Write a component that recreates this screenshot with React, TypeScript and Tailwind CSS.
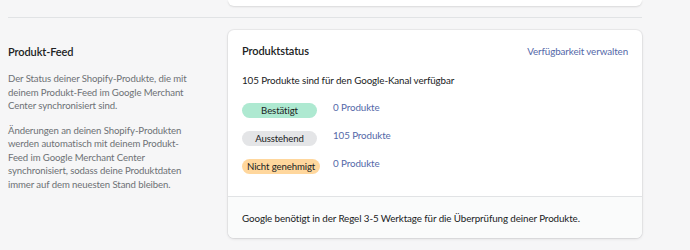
import React from "react";

const rows = [
  { label: "Bestätigt", badge: "bg-[#aee9d1]", count: "0 Produkte" },
  { label: "Ausstehend", badge: "bg-[#e4e5e7]", count: "105 Produkte" },
  { label: "Nicht genehmigt", badge: "bg-[#ffd79d]", count: "0 Produkte" },
];

const App = () => {
  return (
    <div className="w-[690px] h-[250px] overflow-hidden bg-[#f6f6f7] font-['Lato',sans-serif] text-[#202223] tracking-[-0.1px]">
      {/* end of the card above */}
      <div className="ml-[228px] w-[414px] h-[6px] bg-white rounded-b-[6px] shadow-[0_1px_2px_rgba(0,0,0,0.12)]" />

      <div className="ml-[8px] w-[634px] mt-[11px] border-t border-[#e1e3e5]" />

      <div className="flex pt-[12px]">
        <div className="w-[228px] shrink-0 pl-[8px] pr-[32px]">
          <h2 className="mt-[14px] text-[11px] leading-[16px] font-semibold">Produkt-Feed</h2>
          <p className="mt-[12px] text-[9.6px] leading-[13.5px] text-[#6d7175]">
            Der Status deiner Shopify-Produkte, die mit deinem Produkt-Feed im Google Merchant Center synchronisiert sind.
          </p>
          <p className="mt-[11px] text-[9.6px] leading-[13.5px] text-[#6d7175]">
            Änderungen an deinen Shopify-Produkten werden automatisch mit deinem Produkt-Feed im Google Merchant Center synchronisiert, sodass deine Produktdaten immer auf dem neuesten Stand bleiben.
          </p>
        </div>

        <div className="w-[414px] shrink-0 bg-white rounded-[6px] shadow-[0_0_0_1px_rgba(63,63,68,0.06),0_1px_3px_rgba(63,63,68,0.15)] overflow-hidden">
          <div className="px-[14px] pt-[13px] pb-[25px]">
            <div className="flex items-center justify-between">
              <h3 className="text-[11px] leading-[16px] font-semibold">Produktstatus</h3>
              <a className="text-[9.8px] leading-[16px] text-[#5468a8]">Verfügbarkeit verwalten</a>
            </div>
            <p className="mt-[13px] text-[9.8px] leading-[16px]">105 Produkte sind für den Google-Kanal verfügbar</p>
            <div className="mt-[12px] flex flex-col gap-[13px]">
              {rows.map((r) => (
                <div key={r.label} className="flex items-center h-[15px]">
                  <div className="w-[91px] shrink-0">
                    <span className={`inline-flex min-w-[75px] px-[5px] h-[15px] rounded-full ${r.badge} items-center justify-center text-[9.6px] leading-[15px] whitespace-nowrap`}>
                      {r.label}
                    </span>
                  </div>
                  <a className="text-[9.8px] leading-[15px] text-[#5468a8]">{r.count}</a>
                </div>
              ))}
            </div>
          </div>
          <div className="h-[42px] border-t border-[#e1e3e5] bg-[#fafbfb] px-[14px] flex items-center">
            <p className="text-[9.8px] leading-[16px]">Google benötigt in der Regel 3-5 Werktage für die Überprüfung deiner Produkte.</p>
          </div>
        </div>
      </div>
    </div>
  );
};

export default App;
